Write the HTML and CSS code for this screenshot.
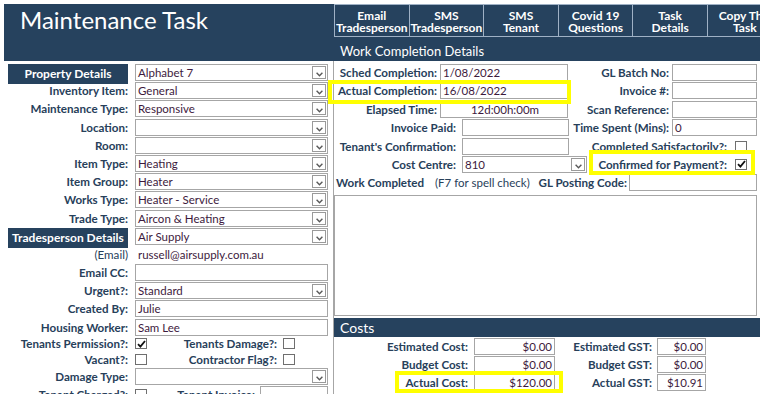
FILE: index.html
```html
<!DOCTYPE html>
<html lang="en">
<head>
    <meta charset="UTF-8">
    <meta name="viewport" content="width=device-width, initial-scale=1.0">
    <title>Maintenance Task</title>
    <link rel="stylesheet" href="styles.css">
</head>
<body>

<div class="page">
    <header class="top">
        <h1 class="title">Maintenance Task</h1>
        <div class="top-right">
            <div class="actions">
                <span class="action">Email<br>Tradesperson</span>
                <span class="action">SMS<br>Tradesperson</span>
                <span class="action">SMS<br>Tenant</span>
                <span class="action">Covid 19<br>Questions</span>
                <span class="action">Task<br>Details</span>
                <span class="action">Copy This<br>Task</span>
            </div>
            <div class="band-title">Work Completion Details</div>
        </div>
    </header>

    <div class="main">
        <!-- left column: property + tradesperson -->
        <section class="left">
            <div class="field">
                <span class="group">Property Details</span>
                <span class="box combo"><span class="val">Alphabet 7</span><span class="drop"><svg width="7" height="5" viewBox="0 0 7 5"><path d="M0.6 0.8 L3.5 3.8 L6.4 0.8" /></svg></span></span>
            </div>
            <div class="field">
                <span class="lbl">Inventory Item:</span>
                <span class="box combo"><span class="val">General</span><span class="drop"><svg width="7" height="5" viewBox="0 0 7 5"><path d="M0.6 0.8 L3.5 3.8 L6.4 0.8" /></svg></span></span>
            </div>
            <div class="field">
                <span class="lbl">Maintenance Type:</span>
                <span class="box combo"><span class="val">Responsive</span><span class="drop"><svg width="7" height="5" viewBox="0 0 7 5"><path d="M0.6 0.8 L3.5 3.8 L6.4 0.8" /></svg></span></span>
            </div>
            <div class="field">
                <span class="lbl">Location:</span>
                <span class="box combo"><span class="val"></span><span class="drop"><svg width="7" height="5" viewBox="0 0 7 5"><path d="M0.6 0.8 L3.5 3.8 L6.4 0.8" /></svg></span></span>
            </div>
            <div class="field">
                <span class="lbl">Room:</span>
                <span class="box combo"><span class="val"></span><span class="drop"><svg width="7" height="5" viewBox="0 0 7 5"><path d="M0.6 0.8 L3.5 3.8 L6.4 0.8" /></svg></span></span>
            </div>
            <div class="field">
                <span class="lbl">Item Type:</span>
                <span class="box combo"><span class="val">Heating</span><span class="drop"><svg width="7" height="5" viewBox="0 0 7 5"><path d="M0.6 0.8 L3.5 3.8 L6.4 0.8" /></svg></span></span>
            </div>
            <div class="field">
                <span class="lbl">Item Group:</span>
                <span class="box combo"><span class="val">Heater</span><span class="drop"><svg width="7" height="5" viewBox="0 0 7 5"><path d="M0.6 0.8 L3.5 3.8 L6.4 0.8" /></svg></span></span>
            </div>
            <div class="field">
                <span class="lbl">Works Type:</span>
                <span class="box combo"><span class="val">Heater - Service</span><span class="drop"><svg width="7" height="5" viewBox="0 0 7 5"><path d="M0.6 0.8 L3.5 3.8 L6.4 0.8" /></svg></span></span>
            </div>
            <div class="field">
                <span class="lbl">Trade Type:</span>
                <span class="box combo"><span class="val">Aircon &amp; Heating</span><span class="drop"><svg width="7" height="5" viewBox="0 0 7 5"><path d="M0.6 0.8 L3.5 3.8 L6.4 0.8" /></svg></span></span>
            </div>
            <div class="field">
                <span class="group">Tradesperson Details</span>
                <span class="box combo"><span class="val">Air Supply</span><span class="drop"><svg width="7" height="5" viewBox="0 0 7 5"><path d="M0.6 0.8 L3.5 3.8 L6.4 0.8" /></svg></span></span>
            </div>
            <div class="field">
                <span class="lbl light">(Email)</span>
                <span class="plain">russell@airsupply.com.au</span>
            </div>
            <div class="field">
                <span class="lbl">Email CC:</span>
                <span class="box"></span>
            </div>
            <div class="field">
                <span class="lbl">Urgent?:</span>
                <span class="box combo"><span class="val">Standard</span><span class="drop"><svg width="7" height="5" viewBox="0 0 7 5"><path d="M0.6 0.8 L3.5 3.8 L6.4 0.8" /></svg></span></span>
            </div>
            <div class="field">
                <span class="lbl">Created By:</span>
                <span class="box">Julie</span>
            </div>
            <div class="field">
                <span class="lbl">Housing Worker:</span>
                <span class="box">Sam Lee</span>
            </div>
            <div class="field short">
                <span class="lbl">Tenants Permission?:</span>
                <span class="pair">
                    <span class="chk"><svg width="9" height="8" viewBox="0 0 9 8"><path d="M1 4.2 L3.4 6.6 L8 1" /></svg></span>
                    <span class="lbl sub">Tenants Damage?:</span>
                    <span class="chk"></span>
                </span>
            </div>
            <div class="field short">
                <span class="lbl">Vacant?:</span>
                <span class="pair">
                    <span class="chk"></span>
                    <span class="lbl sub">Contractor Flag?:</span>
                    <span class="chk"></span>
                </span>
            </div>
            <div class="field damage">
                <span class="lbl">Damage Type:</span>
                <span class="box combo"><span class="val"></span><span class="drop"><svg width="7" height="5" viewBox="0 0 7 5"><path d="M0.6 0.8 L3.5 3.8 L6.4 0.8" /></svg></span></span>
            </div>
            <div class="field">
                <span class="lbl">Tenant Charged?:</span>
                <span class="pair">
                    <span class="chk"></span>
                    <span class="lbl invoice">Tenant Invoice:</span>
                    <span class="box grow"></span>
                </span>
            </div>
        </section>

        <!-- right column: work completion + costs -->
        <section class="right">
            <div class="wc">
                <div class="wc-row">
                    <span class="lbl lbl-a">Sched Completion:</span>
                    <span class="box date">1/08/2022</span>
                    <span class="lbl lbl-r">GL Batch No:</span>
                    <span class="box side"></span>
                </div>
                <div class="wc-row">
                    <span class="lbl lbl-a">Actual Completion:</span>
                    <span class="box date">16/08/2022</span>
                    <span class="lbl lbl-r">Invoice #:</span>
                    <span class="box side"></span>
                </div>
                <div class="wc-row">
                    <span class="lbl lbl-a">Elapsed Time:</span>
                    <span class="box date centred">12d:00h:00m</span>
                    <span class="lbl lbl-r">Scan Reference:</span>
                    <span class="box side"></span>
                </div>
                <div class="wc-row">
                    <span class="lbl lbl-b">Invoice Paid:</span>
                    <span class="box paid"></span>
                    <span class="lbl lbl-r">Time Spent (Mins):</span>
                    <span class="box side">0</span>
                </div>
                <div class="wc-row">
                    <span class="lbl lbl-b">Tenant's Confirmation:</span>
                    <span class="box paid"></span>
                    <span class="lbl lbl-r lbl-check">Completed Satisfactorily?:</span>
                    <span class="chk"></span>
                </div>
                <div class="wc-row">
                    <span class="lbl lbl-b">Cost Centre:</span>
                    <span class="box combo centre"><span class="val">810</span><span class="drop"><svg width="7" height="5" viewBox="0 0 7 5"><path d="M0.6 0.8 L3.5 3.8 L6.4 0.8" /></svg></span></span>
                    <span class="lbl lbl-r lbl-check">Confirmed for Payment?:</span>
                    <span class="chk"><svg width="9" height="8" viewBox="0 0 9 8"><path d="M1 4.2 L3.4 6.6 L8 1" /></svg></span>
                </div>
                <div class="wc-row">
                    <span class="lbl work">Work Completed</span>
                    <span class="hint">(F7 for spell check)</span>
                    <span class="lbl lbl-r posting-lbl">GL Posting Code:</span>
                    <span class="box posting"></span>
                </div>
            </div>

            <div class="memo"></div>

            <div class="band">Costs</div>
            <div class="costs">
                <div class="cost-row">
                    <span class="lbl cost-lbl">Estimated Cost:</span>
                    <span class="box money">$0.00</span>
                    <span class="lbl gst-lbl">Estimated GST:</span>
                    <span class="box money gst">$0.00</span>
                </div>
                <div class="cost-row">
                    <span class="lbl cost-lbl">Budget Cost:</span>
                    <span class="box money">$0.00</span>
                    <span class="lbl gst-lbl">Budget GST:</span>
                    <span class="box money gst">$0.00</span>
                </div>
                <div class="cost-row">
                    <span class="lbl cost-lbl">Actual Cost:</span>
                    <span class="box money">$120.00</span>
                    <span class="lbl gst-lbl">Actual GST:</span>
                    <span class="box money gst">$10.91</span>
                </div>
            </div>
        </section>
    </div>

    <!-- yellow call-outs drawn over the form -->
    <div class="mark mark-completion"></div>
    <div class="mark mark-payment"></div>
    <div class="mark mark-cost"></div>
</div>

</body>
</html>
```
FILE: styles.css
```css
body {
    margin: 0;
    background: #fff;
}

.page {
    position: relative;
    width: 760px;
    height: 394px;
    padding: 4px 0 0 4px;
    box-sizing: border-box;
    overflow: hidden;
    font-family: Lato, "Noto Sans", sans-serif;
    color: #27405a;
}

/* header */
.top {
    display: flex;
    height: 57px;
    background: #26425e;
    color: #fff;
}

.title {
    flex: 0 0 330px;
    margin: 0;
    padding: 2px 0 0 16px;
    box-sizing: border-box;
    font-size: 24px;
    font-weight: 400;
    line-height: 28px;
}

.top-right {
    flex: 1;
    min-width: 0;
    overflow: hidden;
    display: flex;
    flex-direction: column;
}

.actions {
    display: flex;
    height: 33px;
}

.action {
    flex: 0 0 75.6px;
    margin-right: -1px;
    box-sizing: border-box;
    border: 1px solid #9fb1c5;
    padding-top: 4.5px;
    text-align: center;
    font-size: 12px;
    font-weight: 700;
    line-height: 12.5px;
    white-space: nowrap;
}

.band-title {
    padding: 4px 0 0 6px;
    font-size: 13px;
    line-height: 20px;
}

/* body */
.main {
    display: flex;
    height: 333px;
}

.left {
    flex: 0 0 329px;
    padding: 3px 0 0 4px;
    box-sizing: border-box;
    display: flex;
    flex-direction: column;
    gap: 1.2px;
}

.right {
    flex: 1;
    border-left: 1px solid #a6a6a6;
    padding-top: 3px;
}

.field {
    flex-shrink: 0;
    display: grid;
    grid-template-columns: 120px 193px;
    grid-template-rows: 17px;
    column-gap: 7px;
    height: 17px;
    align-items: center;
}

.field.short {
    grid-template-rows: 14px;
    height: 14px;
}

.field.damage {
    margin-top: 1px;
}

.lbl {
    font-size: 11.6px;
    font-weight: 700;
    line-height: 17px;
    white-space: nowrap;
    text-align: right;
}

.lbl.light {
    font-weight: 400;
}

.group {
    align-self: start;
    height: 20px;
    background: #26425e;
    color: #fff;
    font-size: 12px;
    font-weight: 700;
    line-height: 20px;
    text-align: center;
}

.box {
    display: flex;
    align-items: center;
    height: 17px;
    box-sizing: border-box;
    border: 1px solid #a6a6a6;
    padding-left: 2px;
    background: #fff;
    font-size: 11.5px;
    color: #3d1a3d;
    white-space: nowrap;
    overflow: hidden;
}

.plain {
    padding-left: 3px;
    font-size: 11.5px;
    color: #3d1a3d;
}

.combo {
    padding-right: 1px;
}

.combo .val {
    flex: 1;
}

.drop {
    display: flex;
    align-items: flex-end;
    justify-content: center;
    width: 14px;
    height: 13px;
    box-sizing: border-box;
    border: 1px solid #9a9a9a;
    padding-bottom: 1px;
}

.drop path {
    fill: none;
    stroke: #5a5a5a;
    stroke-width: 1.4;
}

.chk {
    display: flex;
    align-items: center;
    justify-content: center;
    flex: 0 0 12px;
    height: 11px;
    box-sizing: border-box;
    border: 1px solid #6f6f6f;
    background: #fff;
}

.chk path {
    fill: none;
    stroke: #111;
    stroke-width: 1.8;
}

.pair {
    display: flex;
    align-items: center;
}

.sub {
    flex: 0 0 130px;
    margin-right: 6px;
}

.invoice {
    flex: 0 0 108px;
    margin-right: 5px;
}

.grow {
    flex: 1;
}

/* work completion block */
.wc {
    display: flex;
    flex-direction: column;
    gap: 1.4px;
}

.wc-row {
    display: flex;
    align-items: center;
    height: 17px;
    padding-right: 3px;
}

.lbl-a {
    flex: 0 0 103px;
    margin-right: 3px;
}

.lbl-b {
    flex: 0 0 122px;
    margin-right: 6px;
}

.lbl-r {
    flex: 1;
    margin-right: 3px;
}

.lbl-check {
    margin-right: 8px;
}

.wc-row .chk {
    margin-right: 10px;
}

.date {
    flex: 0 0 128px;
}

.centred {
    justify-content: center;
}

.paid {
    flex: 0 0 107px;
}

.centre {
    flex: 0 0 125px;
}

.side {
    flex: 0 0 85px;
}

.work {
    padding-left: 2px;
}

.hint {
    margin-left: 11px;
    font-size: 11.5px;
    white-space: nowrap;
}

.posting-lbl {
    margin-right: 2px;
}

.posting {
    flex: 0 0 128px;
}

.memo {
    width: 423px;
    height: 121px;
    margin-top: 3.6px;
    box-sizing: border-box;
    border: 1px solid #a6a6a6;
}

.band {
    height: 19px;
    margin-top: 2px;
    padding-left: 6px;
    background: #26425e;
    color: #fff;
    font-size: 14px;
    line-height: 19px;
}

.costs {
    display: flex;
    flex-direction: column;
    gap: 1px;
    margin-top: 1px;
}

.cost-row {
    display: flex;
    align-items: center;
    height: 17px;
}

.cost-lbl {
    flex: 0 0 134px;
    margin-right: 6px;
}

.gst-lbl {
    flex: 0 0 97px;
    margin-right: 5px;
}

.money {
    flex: 0 0 81px;
    justify-content: flex-end;
    padding-right: 2px;
}

.money.gst {
    flex-basis: 49px;
}

/* yellow highlight frames */
.mark {
    position: absolute;
    box-sizing: border-box;
    border: 4px solid #ffff00;
}

.mark-completion {
    left: 328px;
    top: 80px;
    width: 243px;
    height: 24px;
}

.mark-payment {
    left: 589px;
    top: 150px;
    width: 166px;
    height: 25px;
}

.mark-cost {
    left: 395px;
    top: 371px;
    width: 168px;
    height: 22px;
}
```
